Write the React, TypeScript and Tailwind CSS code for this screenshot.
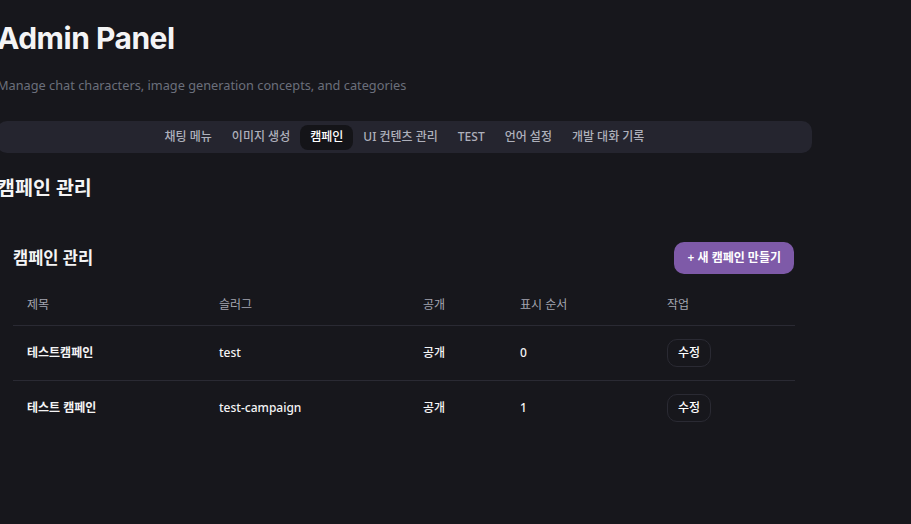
import React from "react";

const tabs = ["채팅 메뉴", "이미지 생성", "캠페인", "UI 컨텐츠 관리", "TEST", "언어 설정", "개발 대화 기록"];

const rows = [
  { title: "테스트캠페인", slug: "test", pub: "공개", order: "0" },
  { title: "테스트 캠페인", slug: "test-campaign", pub: "공개", order: "1" },
];

export default function App() {
  return (
    <div
      className="min-h-[524px] w-full overflow-hidden bg-[#17171c] text-white"
      style={{ fontFamily: '"Noto Sans", "Noto Sans CJK KR", sans-serif' }}
    >
      <div className="ml-[-3px] w-[815px] pt-[20px]">
        <h1
          className="text-[30px] font-bold leading-[36px] tracking-[-0.5px] text-[#f4f4f5]"
          style={{ fontFamily: 'Inter, "Noto Sans CJK KR", sans-serif' }}
        >
          Admin Panel
        </h1>
        <p className="mt-[19px] text-[12.75px] leading-5 text-[#6b6f7b]">
          Manage chat characters, image generation concepts, and categories
        </p>

        <div className="mt-[26px] flex h-[32px] items-center justify-center rounded-[10px] bg-[#25252f]">
          {tabs.map((t) => (
            <div
              key={t}
              className={
                "flex h-[25px] items-center rounded-lg px-[10px] text-[12px] font-medium " +
                (t === "캠페인" ? "bg-[#141418] text-white" : "text-[#aeb0bb]")
              }
            >
              {t}
            </div>
          ))}
        </div>

        <h2 className="mt-[21px] text-[19.5px] font-bold leading-7 text-[#f4f4f5]">캠페인 관리</h2>

        <div className="mt-[40px] pl-[16px] pr-[17px]">
          <div className="flex items-center justify-between">
            <h3 className="text-[16.5px] font-bold leading-6 text-[#f4f4f5]">캠페인 관리</h3>
            <button className="mr-[1px] h-[32px] rounded-[10px] bg-[#7e5aa8] px-[13px] text-[12px] font-semibold text-white">
              + 새 캠페인 만들기
            </button>
          </div>

          <table className="mt-[11px] w-full border-collapse text-left text-[12px]">
            <thead>
              <tr className="h-[40px] border-b border-[#2a2a33] text-[#a3a5b0]">
                <th className="w-[192px] pl-[14px] font-normal">제목</th>
                <th className="w-[204px] pl-[14px] font-normal">슬러그</th>
                <th className="w-[97px] pl-[14px] font-normal">공개</th>
                <th className="w-[147px] pl-[14px] font-normal">표시 순서</th>
                <th className="pl-[14px] font-normal">작업</th>
              </tr>
            </thead>
            <tbody>
              {rows.map((r, i) => (
                <tr
                  key={r.slug}
                  className={"h-[55px] " + (i === 0 ? "border-b border-[#2a2a33]" : "")}
                >
                  <td className="pl-[14px] font-semibold text-[#f4f4f5]">{r.title}</td>
                  <td className="pl-[14px] font-medium text-[#f4f4f5]">{r.slug}</td>
                  <td className="pl-[14px] font-medium text-[#f4f4f5]">{r.pub}</td>
                  <td className="pl-[14px] font-medium text-[#f4f4f5]">{r.order}</td>
                  <td className="pl-[14px]">
                    <button className="h-[28px] w-[44px] rounded-[10px] border border-[#2a2a33] text-[12px] font-medium text-white">
                      수정
                    </button>
                  </td>
                </tr>
              ))}
            </tbody>
          </table>
        </div>
      </div>
    </div>
  );
}
